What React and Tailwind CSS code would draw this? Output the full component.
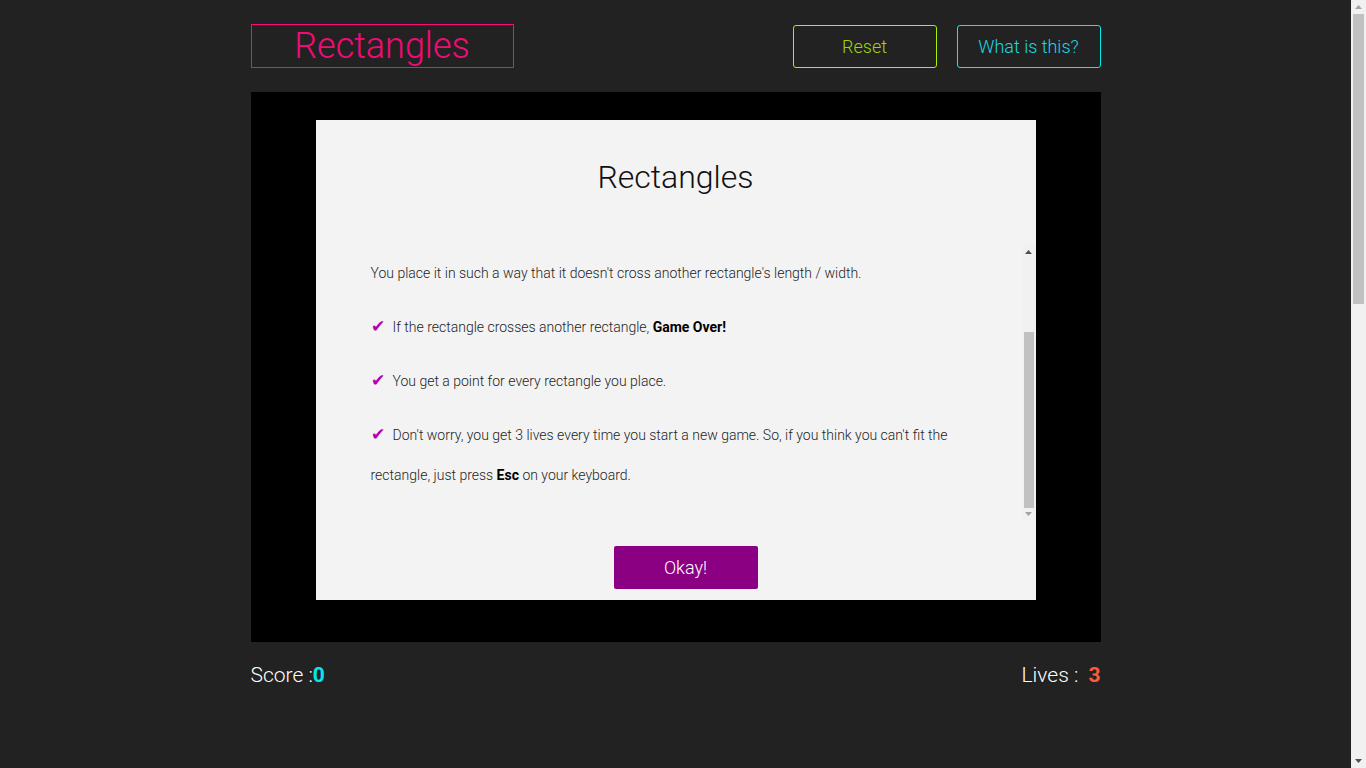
import React, { useEffect, useRef } from 'react';

const Check = () => (
    <span className="mr-[8px] text-[17px] leading-none text-[#b400b4]" style={{ fontFamily: '"DejaVu Sans", sans-serif' }}>✔</span>
);

const Arrow = ({ up, color }) => (
    <svg width="7" height="4" viewBox="0 0 7 4" className="block">
        <path d={up ? 'M0 4 L3.5 0 L7 4 Z' : 'M0 0 L3.5 4 L7 0 Z'} fill={color} />
    </svg>
);

// drawn scrollbar, the headless shot has none of its own
const Scrollbar = ({ width, thumbTop, thumbHeight, upColor, downColor, track }) => (
    <div className={`flex flex-col items-center ${width} ${track}`}>
        <div className="flex h-[14px] w-full items-center justify-center">
            <Arrow up color={upColor} />
        </div>
        <div className="relative w-full flex-1">
            <div className="absolute inset-x-[2px] bg-[#c1c1c1]" style={{ top: thumbTop, height: thumbHeight }} />
        </div>
        <div className="flex h-[14px] w-full items-center justify-center">
            <Arrow color={downColor} />
        </div>
    </div>
);

const App = () => {
    const scrollRef = useRef(null);

    useEffect(() => {
        // the reference shows the help text scrolled to its end
        if (scrollRef.current) scrollRef.current.scrollTop = scrollRef.current.scrollHeight;
    }, []);

    return (
        <div className="flex h-[768px] overflow-hidden bg-[#222222] font-['Roboto',sans-serif]">
            <div className="flex-1">
                <div className="mx-auto w-[850px] pt-6">
                    {/* Header */}
                    <div className="flex items-start justify-between">
                        <div className="flex h-[44px] w-[263px] items-center justify-center border border-[#ff0a78] text-[36px] font-light leading-none text-[#f20a7a]">
                            Rectangles
                        </div>
                        <div className="mt-px flex gap-5">
                            <button className="h-[43px] w-[144px] rounded-[3px] border border-[#aaf000] text-[18px] font-light text-[#9fd40a]">
                                Reset
                            </button>
                            <button className="h-[43px] w-[144px] rounded-[3px] border border-[#00f0f0] text-[18px] font-light text-[#1ad7e0]">
                                What is this?
                            </button>
                        </div>
                    </div>

                    {/* Board */}
                    <div className="mt-6 h-[550px] bg-black px-[65px] pt-[28px]">
                        <div className="flex h-[480px] flex-col bg-[#f3f3f3]">
                            <h2 className="pt-[37px] text-center text-[32px] font-light leading-[40px] text-[#111]">Rectangles</h2>
                            <div className="mt-[48px] flex h-[276px]">
                                <div ref={scrollRef} className="flex-1 overflow-hidden px-[55px] pt-[13px] pb-[12px] text-[14px] font-light leading-[40px] text-[#1e1e1e]">
                                    <p className="mb-[14px]">Draw a rectangle on the black board by clicking and dragging.</p>
                                    <p className="mb-[14px]">Each time, you get a new rectangle to place on the board.</p>
                                    <p className="mb-[14px]">You place it in such a way that it doesn't cross another rectangle's length / width.</p>
                                    <p className="mb-[14px]"><Check />If the rectangle crosses another rectangle, <b className="font-bold text-black">Game Over!</b></p>
                                    <p className="mb-[14px]"><Check />You get a point for every rectangle you place.</p>
                                    <p className="mb-[14px]"><Check />Don't worry, you get 3 lives every time you start a new game. So, if you think you can't fit the rectangle, just press <b className="font-bold text-black">Esc</b> on your keyboard.</p>
                                </div>
                                <Scrollbar width="w-[14px]" track="bg-[#f1f1f1]" thumbTop={73} thumbHeight={176} upColor="#505050" downColor="#a3a3a3" />
                            </div>
                            <div className="mt-[25px] flex justify-center pl-[20px]">
                                <button className="h-[43px] w-[144px] rounded-[2px] bg-[#8b0083] text-[18px] font-light text-white">
                                    Okay!
                                </button>
                            </div>
                        </div>
                    </div>

                    {/* Footer */}
                    <div className="mt-[19px] flex items-center justify-between text-[21px] font-light leading-[28px] text-white">
                        <div>Score :<span className="font-bold text-[#00e8f0]">0</span></div>
                        <div>Lives : <span className="ml-[5px] font-bold text-[#ff5a3a]">3</span></div>
                    </div>
                </div>
            </div>
            <Scrollbar width="w-[15px]" track="bg-[#f1f1f1]" thumbTop={0} thumbHeight={290} upColor="#a3a3a3" downColor="#505050" />
        </div>
    );
};

export default App;
